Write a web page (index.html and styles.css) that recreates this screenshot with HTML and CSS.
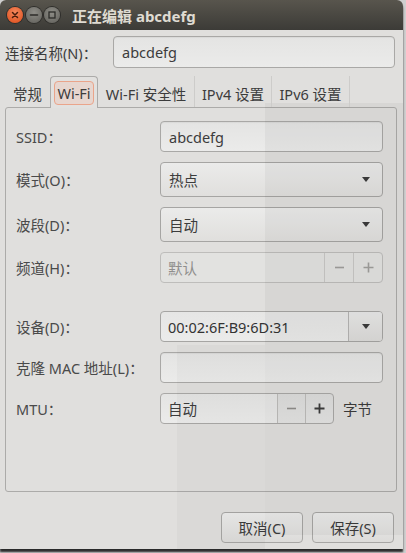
FILE: index.html
```html
<!DOCTYPE html>
<html lang="zh-CN">
<head>
<meta charset="utf-8">
<title>正在编辑 abcdefg</title>
<link rel="stylesheet" href="styles.css">
</head>
<body>
<div class="window">
  <div class="titlebar">
    <div class="wbtns">
      <span class="wbtn close"><svg width="16" height="16" viewBox="0 0 16 16"><path d="M5.5 5.5 L10.5 10.5 M10.5 5.5 L5.5 10.5" stroke="#4a1d0c" stroke-width="1.5" stroke-linecap="round"/></svg></span>
      <span class="wbtn"><svg width="16" height="16" viewBox="0 0 16 16"><path d="M4.5 8 H11.5" stroke="#2c2b28" stroke-width="1.6" stroke-linecap="round"/></svg></span>
      <span class="wbtn"><svg width="16" height="16" viewBox="0 0 16 16"><rect x="5" y="5" width="6" height="6" fill="none" stroke="#2c2b28" stroke-width="1.3"/></svg></span>
    </div>
    <div class="title">正在编辑 abcdefg</div>
  </div>
  <div class="content">
    <div class="name-row">
      <span class="name-label">连接名称(N)：</span>
      <div class="entry name-entry">abcdefg</div>
    </div>
    <div class="tabs">
      <div class="tab t1">常规</div>
      <div class="tab active t2"><span class="focus">Wi-Fi</span></div>
      <div class="tab sep t3">Wi-Fi 安全性</div>
      <div class="tab sep t4">IPv4 设置</div>
      <div class="tab sep t5">IPv6 设置</div>
    </div>
    <div class="panel">
      <div class="row h31">
        <span class="label">SSID：</span>
        <div class="entry widget">abcdefg</div>
      </div>
      <div class="row h35 gap">
        <span class="label">模式(O)：</span>
        <div class="combo widget"><span>热点</span><span class="arrow"></span></div>
      </div>
      <div class="row h35 gap">
        <span class="label">波段(D)：</span>
        <div class="combo widget"><span>自动</span><span class="arrow"></span></div>
      </div>
      <div class="row h31 gap">
        <span class="label">频道(H)：</span>
        <div class="spin widget disabled">
          <span class="spin-text">默认</span>
          <span class="spin-btn"><svg width="11" height="11" viewBox="0 0 11 11"><path d="M1 5.5 H10" stroke="currentColor" stroke-width="1.6"/></svg></span>
          <span class="spin-btn"><svg width="11" height="11" viewBox="0 0 11 11"><path d="M0.5 5.5 H10.5 M5.5 0.5 V10.5" stroke="currentColor" stroke-width="1.6"/></svg></span>
        </div>
      </div>
      <div class="row h31 gap-big">
        <span class="label">设备(D)：</span>
        <div class="combo-entry widget">
          <span class="ce-text">00:02:6F:B9:6D:31</span>
          <span class="ce-btn"><span class="arrow"></span></span>
        </div>
      </div>
      <div class="row h31 gap">
        <span class="label">克隆 MAC 地址(L)：</span>
        <div class="entry widget"></div>
      </div>
      <div class="row h31 gap">
        <span class="label">MTU：</span>
        <div class="spin mtu">
          <span class="spin-text">自动</span>
          <span class="spin-btn dim"><svg width="11" height="11" viewBox="0 0 11 11"><path d="M1 5.5 H10" stroke="currentColor" stroke-width="1.6"/></svg></span>
          <span class="spin-btn"><svg width="11" height="11" viewBox="0 0 11 11"><path d="M0.5 5.5 H10.5 M5.5 0.5 V10.5" stroke="currentColor" stroke-width="1.8"/></svg></span>
        </div>
        <span class="unit">字节</span>
      </div>
    </div>
    <div class="actions">
      <button class="btn">取消(C)</button>
      <button class="btn">保存(S)</button>
    </div>
  </div>
  <div class="shade shade-right"></div>
  <div class="shade shade-mid"></div>
</div>
</body>
</html>
```

FILE: styles.css
```css
* { box-sizing: border-box; }
html, body { margin: 0; padding: 0; }
body {
  width: 406px;
  height: 553px;
  overflow: hidden;
  background: #cfcfcf;
  font-family: "Noto Sans", "Noto Sans CJK SC", sans-serif;
  font-size: 14.5px;
  color: #3c3c3c;
}
.window {
  position: relative;
  width: 403px;
  height: 549px;
  background: #e0dfdd;
  border-radius: 6px 6px 0 0;
  box-shadow: 0 3px 2px rgba(0,0,0,0.8);
  display: flex;
  flex-direction: column;
}
.titlebar {
  height: 30px;
  flex: none;
  background: linear-gradient(#58554d, #3c3b37);
  border-radius: 6px 6px 0 0;
  display: flex;
  align-items: center;
  padding-left: 7px;
}
.wbtns { display: flex; gap: 2.5px; }
.wbtn {
  width: 16px;
  height: 16px;
  border-radius: 50%;
  background: radial-gradient(circle at 50% 35%, #8e8d87, #5f5e59);
  box-shadow: 0 0 0 1px #2f2e2b;
  display: block;
}
.wbtn svg { display: block; }
.wbtn.close { background: radial-gradient(circle at 50% 35%, #f6895e, #dc4a17); }
.title {
  margin-left: 12px;
  font-family: "Noto Sans", "Noto Sans CJK SC", sans-serif;
  font-weight: bold;
  font-size: 15px;
  color: #dfdbd2;
}
.content {
  flex: 1;
  display: flex;
  flex-direction: column;
  padding: 6px 6px 0 5px;
}
.name-row { display: flex; align-items: center; height: 32px; }
.name-label { width: 108px; flex: none; color: #3c3c3c; }
.entry {
  height: 100%;
  border: 1px solid #a9a8a6;
  border-radius: 4px;
  background: linear-gradient(#e4e4e3, #ebebea);
  box-shadow: inset 0 1px 1px rgba(0,0,0,0.05);
  padding: 0 8px;
  display: flex;
  align-items: center;
}
.name-entry { flex: 1; margin-right: 2px; }
.tabs {
  margin-top: 8px;
  height: 31px;
  display: flex;
  align-items: flex-end;
  position: relative;
  z-index: 1;
}
.tab {
  height: 27px;
  display: flex;
  align-items: center;
  justify-content: center;
  flex: none;
  color: #3c3c3c;
}
.tab.sep { border-right: 1px solid #cdccca; height: 31px; padding-top: 4px; }
.t1 { width: 45px; }
.t2 { width: 48px; }
.t3 { width: 97px; }
.t4 { width: 77px; }
.t5 { width: 78px; }
.tab.active {
  height: 32px;
  margin-bottom: -1px;
  border: 1px solid #acaba9;
  border-bottom: none;
  border-radius: 4px 4px 0 0;
  background: #e2e1df;
  padding-top: 1px;
}
.focus {
  height: 24px;
  padding: 0 2px;
  display: flex;
  align-items: center;
  border: 1px solid #eaa48a;
  border-radius: 4px;
  background: #e7d6cf;
}
.panel {
  height: 385px;
  flex: none;
  border: 1px solid #acaba9;
  border-radius: 3px;
  padding: 13px 13px 0 10px;
  display: flex;
  flex-direction: column;
}
.row { display: flex; align-items: center; flex: none; }
.h31 { height: 31px; }
.h35 { height: 35px; }
.gap { margin-top: 10px; }
.gap-big { margin-top: 28px; }
.label { width: 144px; flex: none; color: #4a4a4a; }
.widget { width: 223px; flex: none; height: 100%; }
.combo {
  border: 1px solid #a6a5a3;
  border-radius: 4px;
  background: linear-gradient(#ebebea, #e0dfdd);
  display: flex;
  align-items: center;
  justify-content: space-between;
  padding: 0 12px 0 8px;
}
.arrow {
  width: 0;
  height: 0;
  border-left: 4.5px solid transparent;
  border-right: 4.5px solid transparent;
  border-top: 5px solid #3c3c3c;
}
.spin {
  height: 100%;
  border: 1px solid #a9a8a6;
  border-radius: 4px;
  background: linear-gradient(#e4e4e3, #ebebea);
  display: flex;
  align-items: stretch;
}
.spin-text { flex: 1; display: flex; align-items: center; padding-left: 7px; }
.spin-btn {
  width: 29px;
  border-left: 1px solid #bdbcba;
  display: flex;
  align-items: center;
  justify-content: center;
  color: #3c3c3c;
  background: rgba(0,0,0,0.03);
}
.spin-btn:last-child { border-radius: 0 3px 3px 0; }
.spin-btn svg { display: block; }
.spin-btn.dim { color: #8f8e8b; }
.spin.disabled {
  background: #e2e2e0;
  border-color: #bebdbb;
}
.spin.disabled .spin-text { color: #8f8e8c; }
.spin.disabled .spin-btn { color: #a09f9c; border-left-color: #c8c7c5; background: transparent; }
.mtu { width: 174px; flex: none; }
.mtu .spin-btn { width: 28px; }
.unit { margin-left: 9px; color: #3c3c3c; }
.combo-entry {
  border: 1px solid #a6a5a3;
  border-radius: 4px;
  background: linear-gradient(#e6e6e5, #ebebea);
  display: flex;
  align-items: stretch;
}
.ce-text { flex: 1; display: flex; align-items: center; padding-left: 7px; color: #333; }
.ce-btn {
  width: 34px;
  border-left: 1px solid #b5b4b2;
  background: linear-gradient(#e8e8e7, #dcdbd9);
  border-radius: 0 3px 3px 0;
  display: flex;
  align-items: center;
  justify-content: center;
}
.actions {
  margin-top: 20px;
  display: flex;
  justify-content: flex-end;
  gap: 9px;
  padding-right: 3px;
}
.btn {
  width: 82px;
  height: 31px;
  border: 1px solid #a7a6a4;
  border-radius: 4px;
  background: linear-gradient(#ebebea, #dddcda);
  font-family: "Noto Sans", "Noto Sans CJK SC", sans-serif;
  font-size: 14.5px;
  color: #3c3c3c;
  padding: 0;
}
.shade { position: absolute; pointer-events: none; }
.shade-right { left: 265px; top: 103px; width: 138px; height: 432px; background: rgba(0,0,0,0.04); }
.shade-mid { left: 177px; top: 345px; width: 88px; height: 204px; background: rgba(0,0,0,0.022); }
```
